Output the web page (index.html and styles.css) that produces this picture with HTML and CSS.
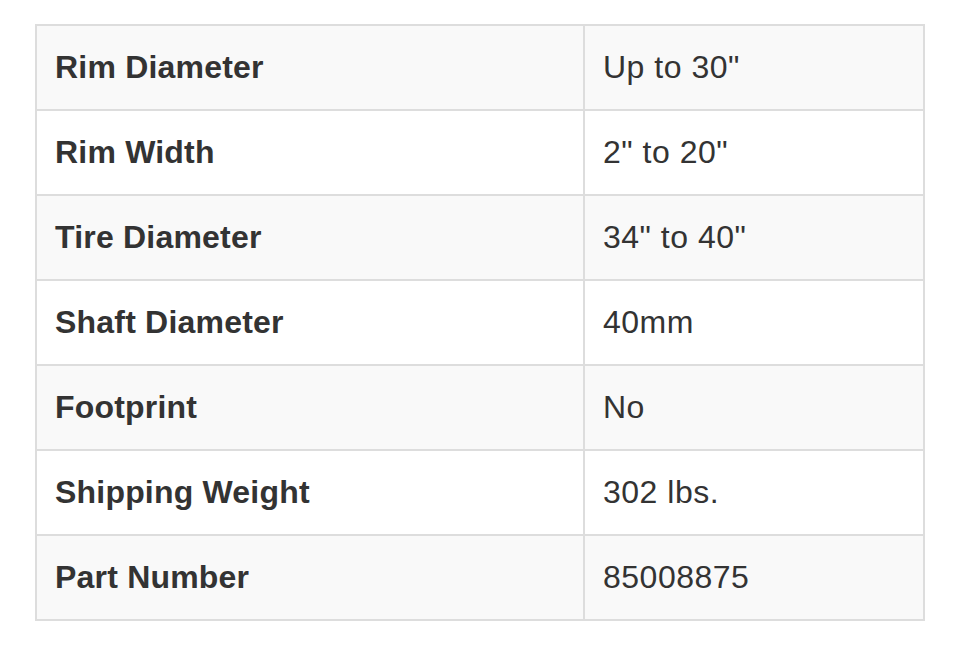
FILE: index.html
```html
<!DOCTYPE html>
<html>
<head>
<meta charset="utf-8">
<link rel="stylesheet" href="styles.css">
</head>
<body>
<div class="wrap">
<table class="specs">
<tbody>
<tr><th>Rim Diameter</th><td>Up to 30"</td></tr>
<tr><th>Rim Width</th><td>2" to 20"</td></tr>
<tr><th>Tire Diameter</th><td>34" to 40"</td></tr>
<tr><th>Shaft Diameter</th><td>40mm</td></tr>
<tr><th>Footprint</th><td>No</td></tr>
<tr><th>Shipping Weight</th><td>302 lbs.</td></tr>
<tr><th>Part Number</th><td>85008875</td></tr>
</tbody>
</table>
</div>
</body>
</html>
```
FILE: styles.css
```css
html, body {
  margin: 0;
  padding: 0;
  background: #fff;
}
.wrap {
  padding: 24px 35px;
}
.specs {
  width: 890px;
  border-collapse: collapse;
  border: 2px solid #dddddd;
  font-family: "Liberation Sans", Arial, sans-serif;
  font-size: 32px;
  color: #333;
}
.specs tr:nth-child(odd) {
  background: #f9f9f9;
}
.specs th, .specs td {
  border: 2px solid #dddddd;
  height: 85px;
  padding: 0 18px;
  text-align: left;
  vertical-align: middle;
  box-sizing: border-box;
  line-height: 1.2;
}
.specs th {
  width: 548px;
  font-weight: bold;
  letter-spacing: 0.2px;
}
.specs td {
  font-weight: normal;
  letter-spacing: 0.5px;
}
```
